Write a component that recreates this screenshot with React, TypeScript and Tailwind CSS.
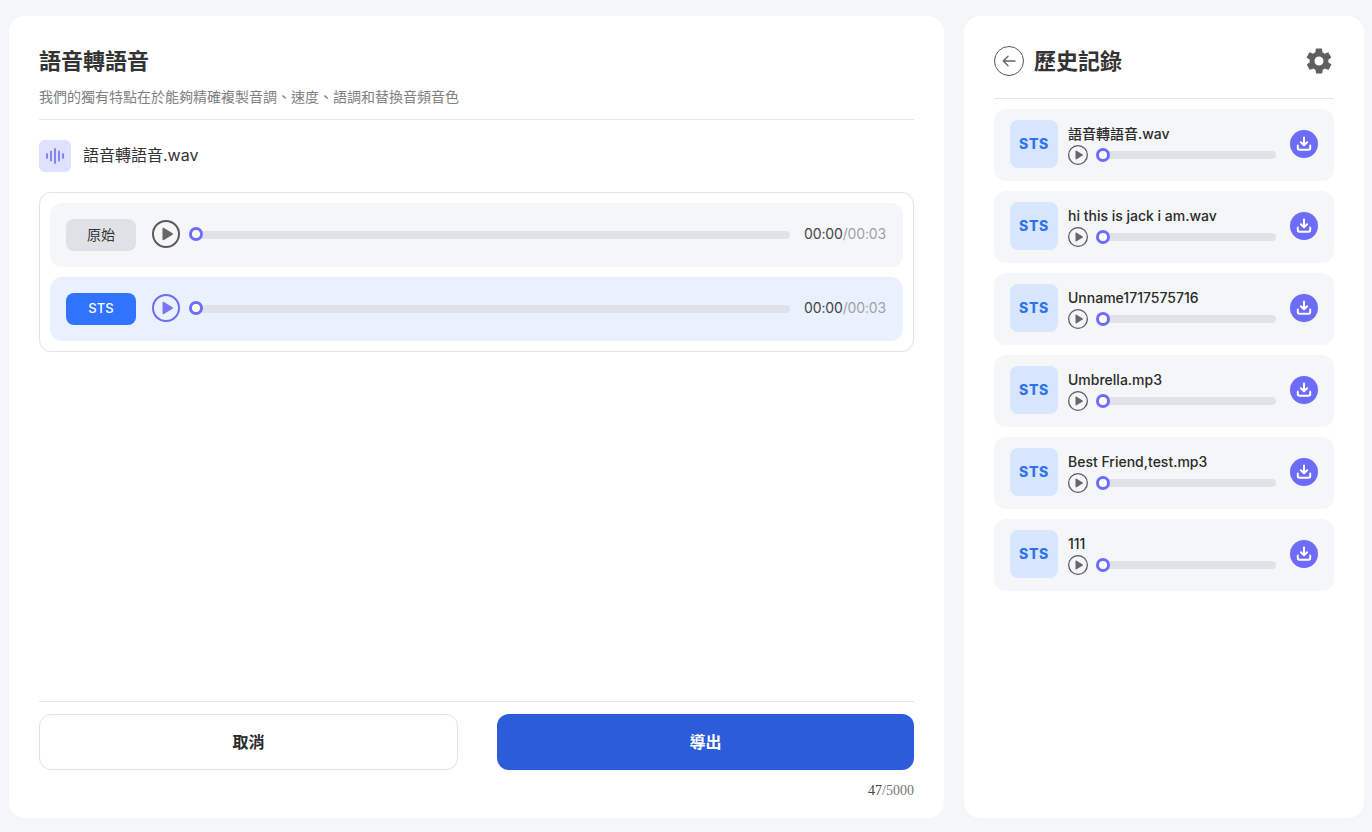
import React from "react";

function PlayIcon({ size, color, stroke }: { size: number; color: string; stroke: number }) {
  return (
    <svg width={size} height={size} viewBox="0 0 28 28" fill="none" className="shrink-0">
      <circle cx="14" cy="14" r={14 - stroke / 2} stroke={color} strokeWidth={stroke} />
      <path d="M10.5 8.8c0-.8.8-1.2 1.500-.8l8.500 5.200c.6.4.6 1.200 0 1.600l-8.500 5.200c-.7.4-1.500 0-1.500-.8z" fill={color} opacity="0.92" />
    </svg>
  );
}

function Track({ raised }: { raised?: boolean }) {
  return (
    <div className="relative flex-1 flex items-center">
      <div className="h-[8px] w-full rounded-full bg-[#e0e1e9]" />
      <div className={`absolute left-0 -translate-y-1/2 w-[14px] h-[14px] rounded-full bg-white border-[3px] border-[#6c6cff] ${raised ? "top-[calc(50%-1px)]" : "top-1/2"}`} />
    </div>
  );
}

function WaveIcon() {
  return (
    <svg width="20" height="20" viewBox="0 0 20 20" fill="none" stroke="#7b7bf0" strokeWidth="1.8" strokeLinecap="round">
      <path d="M2 8v4M6 5.500v9M10 3v14M14 5.500v9M18 8v4" />
    </svg>
  );
}

function PlayerRow({ label, active }: { label: string; active?: boolean }) {
  return (
    <div className={`h-16 rounded-xl flex items-center pl-4 pr-[17px] ${active ? "bg-[#e9f1fe]" : "bg-[#f5f6f8]"}`}>
      <div className={`w-[70px] h-8 rounded-lg flex items-center justify-center ${active ? "bg-[#2f73ff] text-white text-[13px] font-medium" : "bg-[#e0e1e7] text-[#333] text-[14px] pb-[2px]"}`}>
        {label}
      </div>
      <div className="ml-4 pb-[2px] flex items-center">
        <PlayIcon size={28} color={active ? "#6c6cf2" : "#5a5a5a"} stroke={2} />
      </div>
      <div className="ml-[9px] flex-1 flex items-center">
        <Track raised />
      </div>
      <div className="ml-[14px] pb-[3px] text-[14px] text-[#444] tracking-[-0.15px]">
        00:00<span className="text-[#a0a1a8]">/00:03</span>
      </div>
    </div>
  );
}

function HistoryItem({ name }: { name: string }) {
  return (
    <div className="h-[72px] rounded-xl bg-[#f5f6f8] flex items-center px-4 pb-[2px]">
      <div className="w-12 h-12 rounded-lg bg-[#d7e5fe] flex items-center justify-center pb-[2px] text-[14px] font-extrabold text-[#2f73e8] tracking-[0.6px]">
        STS
      </div>
      <div className="ml-[10px] w-[208px] flex flex-col">
        <div className="text-[14px] font-medium leading-5 text-[#2b2b2b]">{name}</div>
        <div className="flex items-center mt-[1px]">
          <PlayIcon size={20} color="#5a5a5a" stroke={1.8} />
          <div className="ml-2 flex-1 flex items-center">
            <Track />
          </div>
        </div>
      </div>
      <div className="ml-auto w-7 h-7 rounded-full bg-[#6c6cf8] flex items-center justify-center">
        <svg width="16" height="16" viewBox="0 0 16 16" fill="none" stroke="white" strokeWidth="2" strokeLinecap="round" strokeLinejoin="round">
          <path d="M8 1.500v7.400M4.900 6.200 8 9.200l3.100-3" />
          <path d="M1.800 9.600v2.400c0 1 .7 1.700 1.700 1.700h9c1 0 1.700-.7 1.700-1.700V9.600" />
        </svg>
      </div>
    </div>
  );
}

const items = ["語音轉語音.wav", "hi this is jack i am.wav", "Unname1717575716", "Umbrella.mp3", "Best Friend,test.mp3", "111"];

export default function App() {
  return (
    <div className="w-[1372px] h-[832px] overflow-hidden bg-[#f4f6f8] flex gap-5 pl-[9px] pt-4 pb-[14px] font-['Inter','Noto_Sans_CJK_TC',sans-serif]">
      <div className="w-[935px] bg-white rounded-2xl px-[30px] pt-[30px] pb-[19px] flex flex-col">
        <div className="text-[22px] font-bold leading-[30px] text-[#333]">語音轉語音</div>
        <div className="mt-[11px] text-[14px] leading-5 text-[#808080]">我們的獨有特點在於能夠精確複製音調、速度、語調和替換音頻音色</div>
        <div className="mt-3 h-px bg-[#e5e6ea]" />
        <div className="mt-5 flex items-center">
          <div className="w-8 h-8 rounded-md bg-[#e0e0ff] flex items-center justify-center">
            <WaveIcon />
          </div>
          <div className="ml-3 pb-[2px] text-[16px] text-[#333]">語音轉語音.wav</div>
        </div>
        <div className="mt-5 h-40 rounded-xl border border-[#e2e3e8] p-[10px] flex flex-col gap-[10px]">
          <PlayerRow label="原始" />
          <PlayerRow label="STS" active />
        </div>
        <div className="flex-1" />
        <div className="h-px bg-[#e5e6ea]" />
        <div className="mt-3 flex justify-between">
          <div className="w-[419px] h-14 rounded-xl border border-[#e2e3e8] flex items-center justify-center text-[16px] font-bold text-[#2b2b2b]">取消</div>
          <div className="w-[417px] h-14 rounded-xl bg-[#2b5cd9] flex items-center justify-center text-[16px] font-bold text-white">導出</div>
        </div>
        <div className="mt-[13px] text-right text-[14px] leading-4 font-['Liberation_Serif',serif] text-[#777]">
          <span className="text-[#444]">47</span>/5000
        </div>
      </div>
      <div className="w-[400px] bg-white rounded-2xl px-[30px] pt-[30px] flex flex-col">
        <div className="h-[30px] flex items-center">
          <div className="w-[30px] h-[30px] rounded-full border border-[#555] flex items-center justify-center">
            <svg width="16" height="16" viewBox="0 0 16 16" fill="none" stroke="#666" strokeWidth="1.4" strokeLinecap="round" strokeLinejoin="round">
              <path d="M14 8H2.500M7 3.200 2.300 8 7 12.800" />
            </svg>
          </div>
          <div className="ml-[10px] text-[22px] font-bold text-[#333]">歷史記錄</div>
          <svg className="ml-auto" width="30" height="30" viewBox="0 0 24 24" fill="#5f5f5f">
            <path d="M19.4 13c.1-.3.1-.7.1-1s0-.7-.1-1l2.100-1.600c.2-.2.2-.4.1-.6l-2-3.500c-.1-.2-.4-.3-.6-.2l-2.500 1c-.5-.4-1.100-.7-1.700-1l-.4-2.600c0-.3-.2-.5-.5-.5h-4c-.3 0-.5.2-.5.4l-.4 2.700c-.6.2-1.200.6-1.700 1l-2.500-1c-.2-.1-.5 0-.6.2l-2 3.500c-.1.2-.1.5.1.6L4.600 11c-.1.3-.1.7-.1 1s0 .7.1 1l-2.100 1.600c-.2.2-.2.4-.1.6l2 3.500c.1.2.4.3.6.2l2.500-1c.5.4 1.100.7 1.700 1l.4 2.600c0 .3.2.5.5.5h4c.3 0 .5-.2.5-.4l.4-2.700c.6-.2 1.200-.6 1.700-1l2.500 1c.2.1.5 0 .6-.2l2-3.500c.1-.2.1-.5-.1-.6zM12 15.600a3.600 3.600 0 1 1 0-7.200 3.600 3.600 0 0 1 0 7.200z" />
          </svg>
        </div>
        <div className="mt-[22px] h-px bg-[#e5e6ea]" />
        <div className="mt-[10px] flex flex-col gap-[10px]">
          {items.map((n) => (
            <HistoryItem key={n} name={n} />
          ))}
        </div>
      </div>
    </div>
  );
}
